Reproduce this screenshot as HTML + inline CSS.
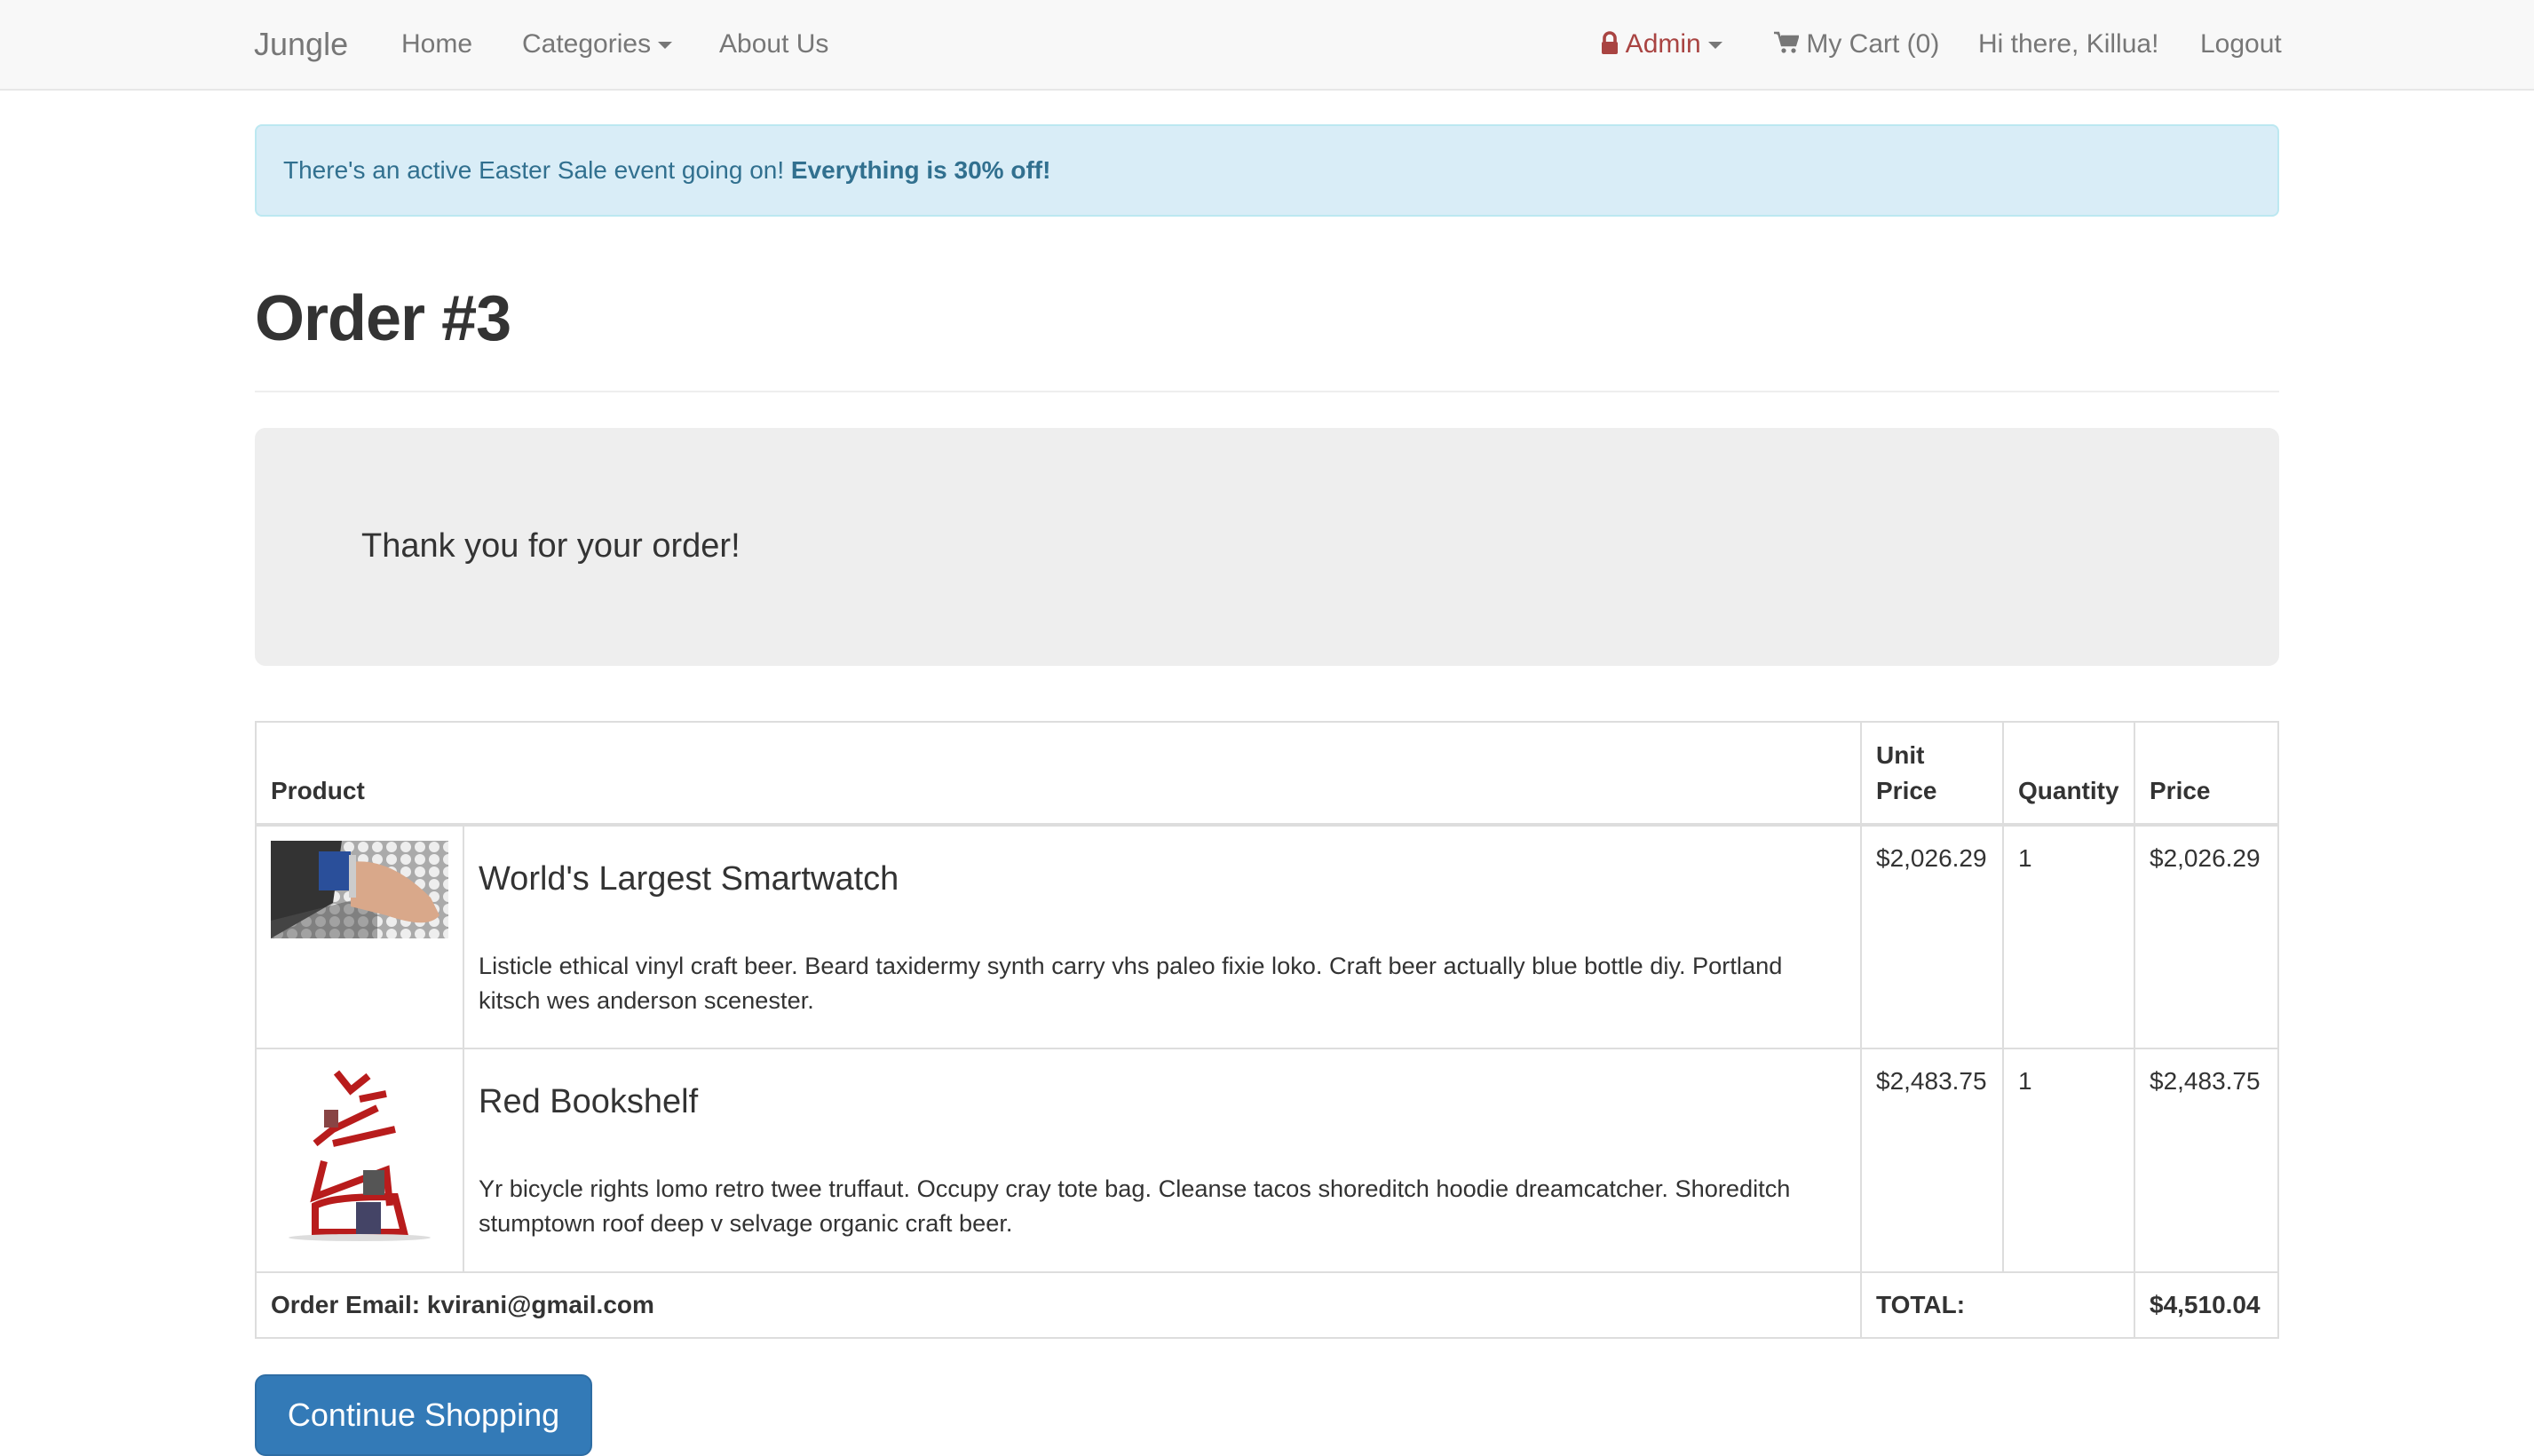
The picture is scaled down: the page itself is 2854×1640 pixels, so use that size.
<!DOCTYPE html>
<html><head><meta charset="utf-8"><style>
html{zoom:2}
body{margin:0;width:1427px;height:820px;overflow:hidden;font-family:"Liberation Sans",Helvetica,Arial,sans-serif;font-size:14px;line-height:1.42857;color:#333;background:#fff;position:relative}
.nav{height:50px;background:#f8f8f8;border-bottom:1px solid #e7e7e7;position:relative}
.nav a{position:absolute;top:0;line-height:50px;color:#777;font-size:15px;text-decoration:none;white-space:nowrap}
.car{display:inline-block;width:0;height:0;border-left:4px solid transparent;border-right:4px solid transparent;border-top:4px solid #777;vertical-align:middle;margin-left:4px}
.container{position:absolute;top:0;left:143.5px;width:1140px}
.alert{position:absolute;top:70px;left:0;width:1108px;height:20px;padding:15px;background:#d9edf7;border:1px solid #bce8f1;border-radius:4px;color:#31708f}
h1{position:absolute;top:160px;margin:0;font-size:36px;font-weight:bold;line-height:1.1;letter-spacing:-0.5px}
.hr{position:absolute;top:220px;left:0;width:1140px;border-top:1px solid #eee}
.jumbo{position:absolute;top:241px;left:0;width:1140px;height:134px;background:#eee;border-radius:6px}
.jumbo div{position:absolute;left:60px;top:53px;font-size:19px;font-weight:500}
table{position:absolute;top:406px;left:0;width:1140px;border-collapse:collapse;table-layout:fixed}
td,th{border:1px solid #ddd;padding:8px;vertical-align:top;text-align:left;box-sizing:border-box}
th{vertical-align:bottom;border-bottom:2px solid #ddd}
h4{font-size:19px;font-weight:500;margin:8px 0 26px}
p{margin:0;font-size:13.6px}
.btn{position:absolute;top:774px;left:0;width:190px;height:46px;box-sizing:border-box;background:#337ab7;border:1px solid #2e6da4;border-radius:6px;color:#fff;font-size:18px;line-height:44px;text-align:center}
</style></head><body>
<div class="nav">
<a style="left:143px;font-size:18px">Jungle</a>
<a style="left:226px">Home</a>
<a style="left:294px">Categories<span class="car"></span></a>
<a style="left:405px">About Us</a>
<a style="left:901px;color:#a94442"><svg width="11" height="13" viewBox="0 0 11 13" style="vertical-align:-1px"><path d="M2.5 6V4a3 3 0 0 1 6 0v2" fill="none" stroke="#a94442" stroke-width="1.8"/><rect x="1" y="6" width="9" height="7" rx="1" fill="#a94442"/></svg> Admin<span class="car"></span></a>
<a style="left:999px"><svg width="14" height="13" viewBox="0 0 14 13" style="vertical-align:-1px"><path d="M0 1h2.5l2 7h7.5l1.5-5H4" fill="#777" stroke="#777" stroke-width="1.3"/><circle cx="5.5" cy="11" r="1.3" fill="#777"/><circle cx="11" cy="11" r="1.3" fill="#777"/></svg> My Cart (0)</a>
<a style="left:1114px">Hi there, Killua!</a>
<a style="left:1239px">Logout</a>
</div>
<div class="container">
<div class="alert">There's an active Easter Sale event going on! <b>Everything is 30% off!</b></div>
<h1>Order #3</h1>
<div class="hr"></div>
<div class="jumbo"><div>Thank you for your order!</div></div>
<table>
<colgroup><col style="width:117px"><col><col style="width:80px"><col style="width:74px"><col style="width:81px"></colgroup>
<tr style="height:58px"><th colspan="2">Product</th><th>Unit Price</th><th>Quantity</th><th>Price</th></tr>
<tr style="height:126px"><td><svg width="100" height="55" viewBox="0 0 100 55"><defs><pattern id="h" width="8" height="7" patternUnits="userSpaceOnUse"><rect width="8" height="7" fill="#aaa"/><circle cx="4" cy="3.5" r="3" fill="#eee"/></pattern></defs><rect width="100" height="55" fill="url(#h)"/><path d="M0 0h40l-5 35L0 55z" fill="#333"/><path d="M0 45l60-15 0 25H0z" fill="#555" opacity=".5"/><rect x="27" y="6" width="18" height="22" fill="#2a4f9a"/><path d="M45 12c15-2 30 5 45 20l5 10c-5 6-15 5-30 0l-20-5z" fill="#d9a88a"/><rect x="44" y="8" width="4" height="24" fill="#ccc"/></svg></td>
<td><h4>World's Largest Smartwatch</h4><p>Listicle ethical vinyl craft beer. Beard taxidermy synth carry vhs paleo fixie loko. Craft beer actually blue bottle diy. Portland kitsch wes anderson scenester.</p></td><td>$2,026.29</td><td>1</td><td>$2,026.29</td></tr>
<tr style="height:126px"><td><svg width="100" height="100" viewBox="0 0 100 100"><g fill="none" stroke="#b81c1c" stroke-width="4"><path d="M37 5l8 10 10-8M50 20l15-3M60 25l-25 12-10 8M35 45l35-8M30 55l-5 20 40-15 2 20M25 80c10-5 30-5 45-5l5 20H25z"/></g><rect x="52" y="60" width="12" height="14" fill="#555"/><rect x="48" y="78" width="14" height="18" fill="#446"/><rect x="30" y="26" width="8" height="10" fill="#844"/><ellipse cx="50" cy="98" rx="40" ry="2" fill="#ddd"/></svg></td>
<td><h4>Red Bookshelf</h4><p>Yr bicycle rights lomo retro twee truffaut. Occupy cray tote bag. Cleanse tacos shoreditch hoodie dreamcatcher. Shoreditch stumptown roof deep v selvage organic craft beer.</p></td><td>$2,483.75</td><td>1</td><td>$2,483.75</td></tr>
<tr style="height:37px"><th colspan="2" style="vertical-align:middle;border-bottom-width:1px">Order Email: kvirani@gmail.com</th><th colspan="2" style="vertical-align:middle;border-bottom-width:1px">TOTAL:</th><th style="vertical-align:middle;border-bottom-width:1px">$4,510.04</th></tr>
</table>
<div class="btn">Continue Shopping</div>
</div>
</body></html>
